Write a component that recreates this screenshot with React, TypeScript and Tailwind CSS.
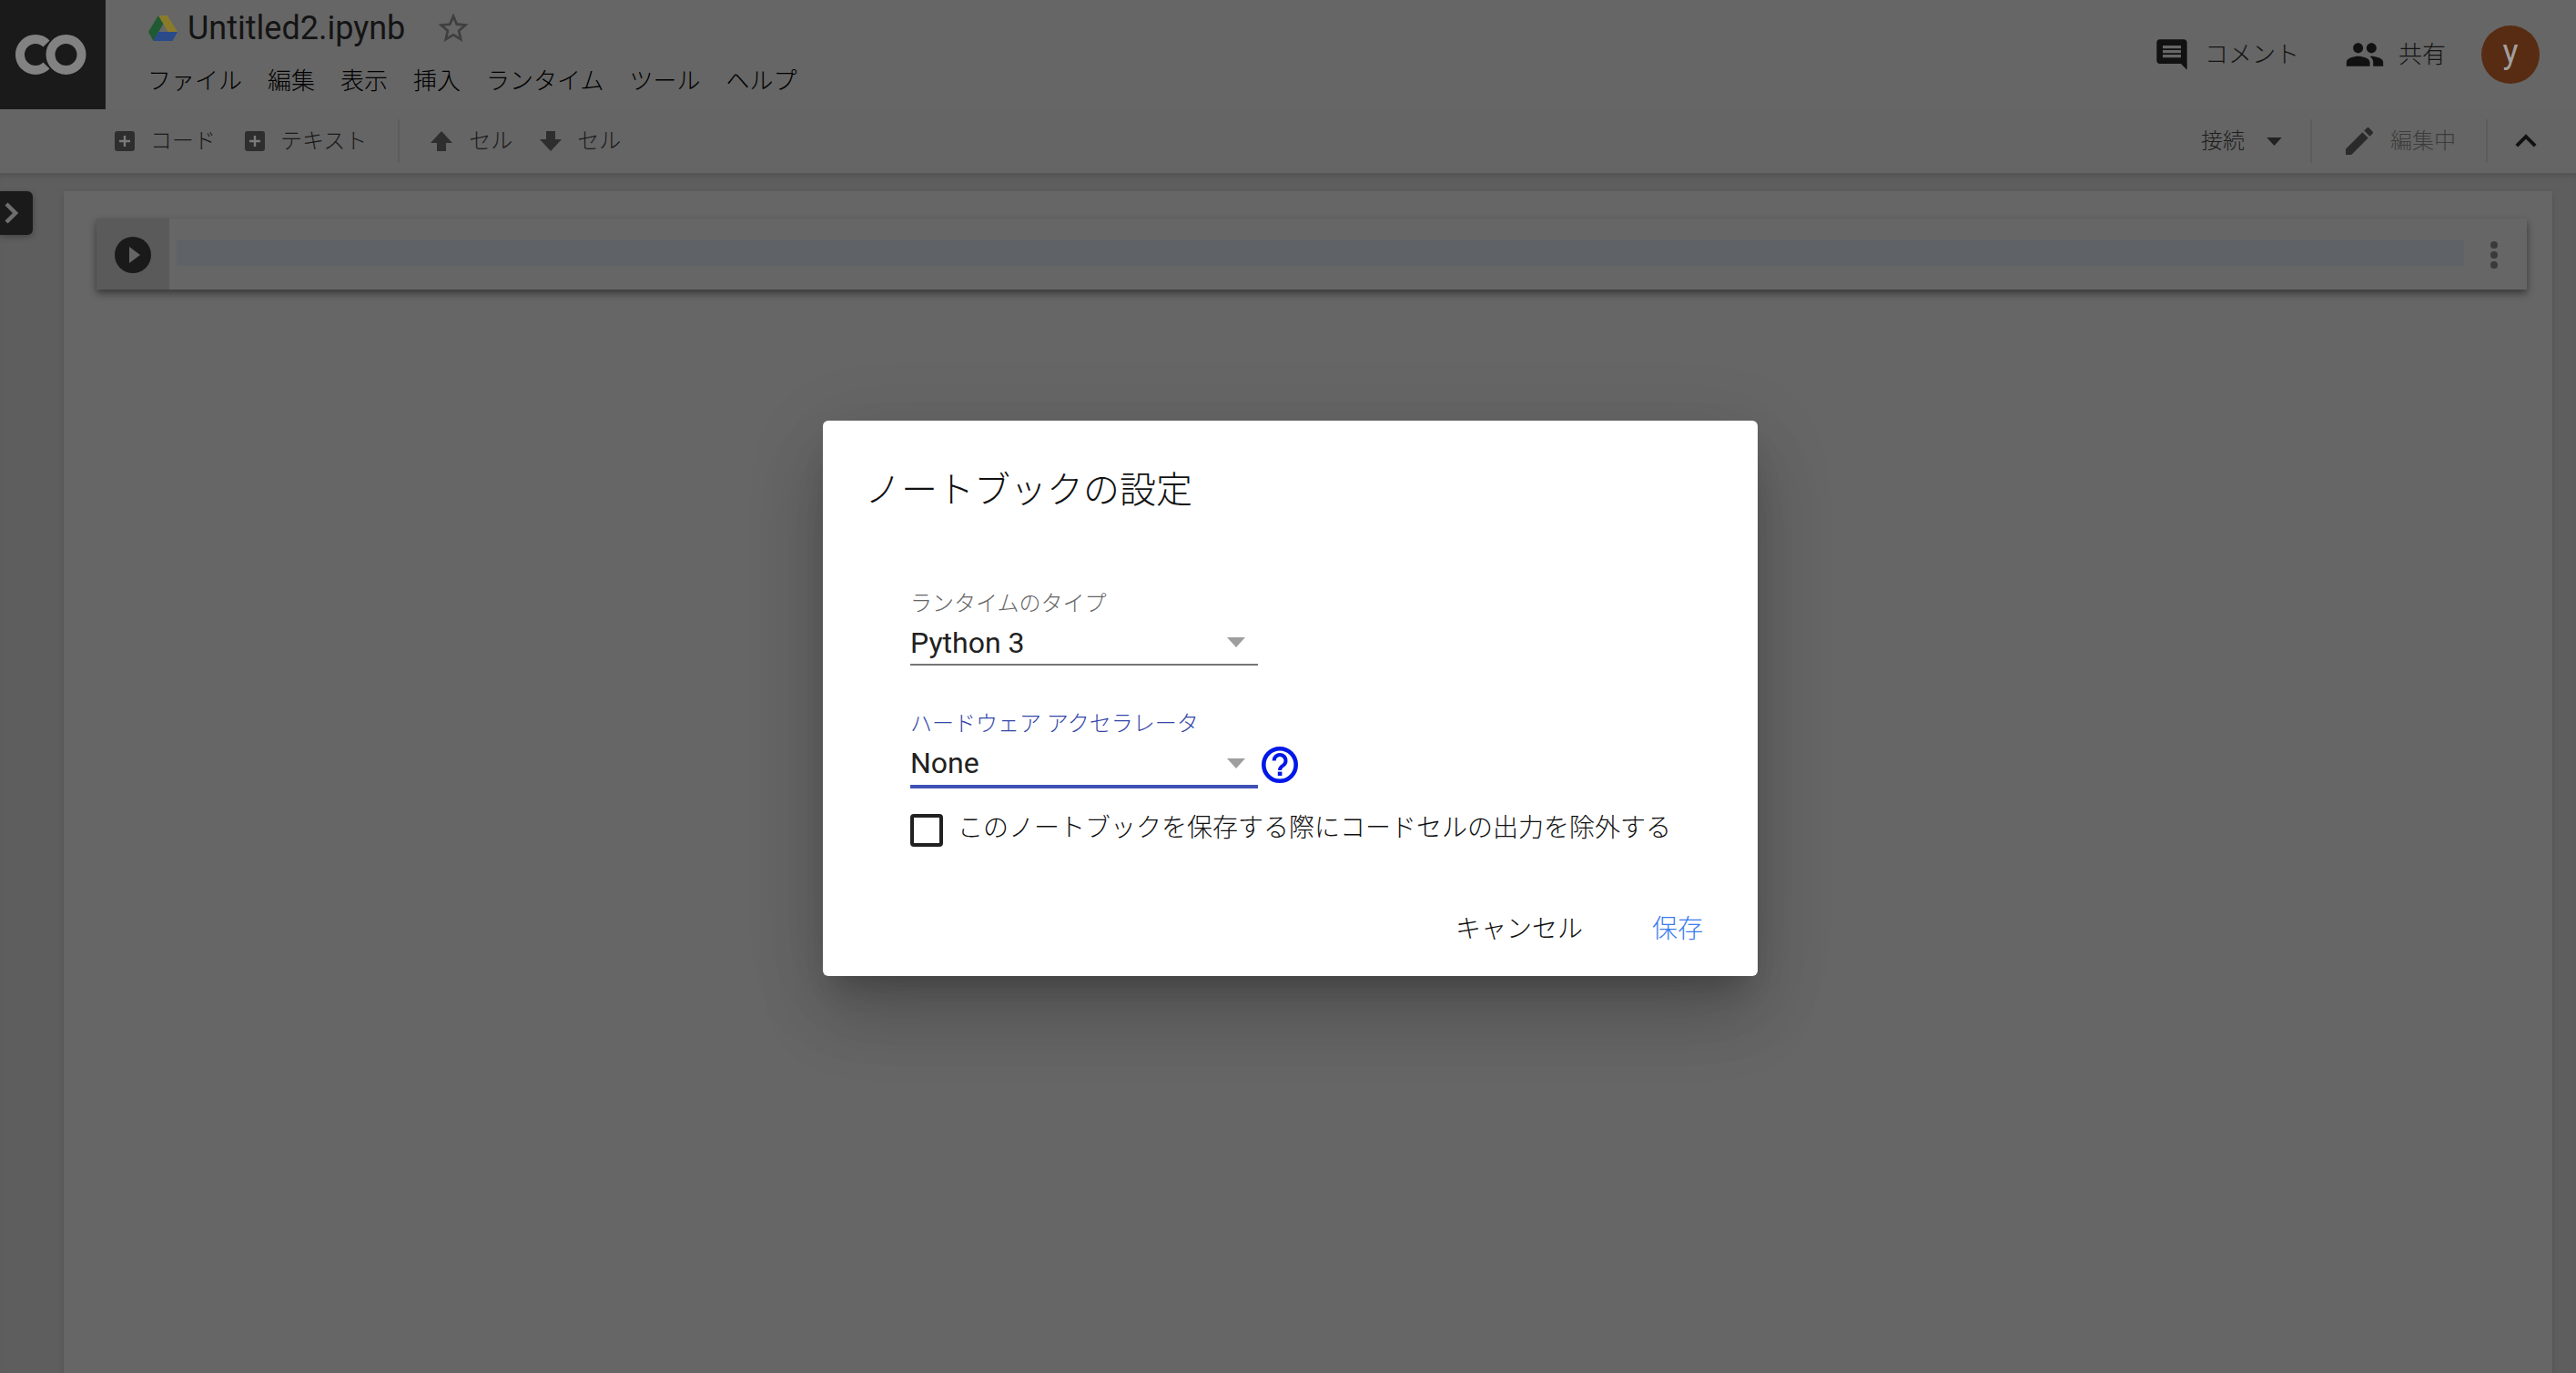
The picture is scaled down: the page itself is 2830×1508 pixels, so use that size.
import React from "react";

function Icon({ d, className }: { d: string; className: string }) {
  return (
    <svg viewBox="0 0 24 24" className={className} fill="currentColor" aria-hidden="true">
      <path d={d} />
    </svg>
  );
}

const COMMENT = "M21.99 4c0-1.1-.89-2-1.99-2H4c-1.1 0-2 .9-2 2v12c0 1.1.9 2 2 2h14l4 4-.01-18zM18 14H6v-2h12v2zm0-3H6V9h12v2zm0-3H6V6h12v2z";
const PEOPLE = "M16 11c1.66 0 2.99-1.34 2.99-3S17.66 5 16 5c-1.66 0-3 1.34-3 3s1.34 3 3 3zm-8 0c1.66 0 2.99-1.34 2.99-3S9.66 5 8 5C6.34 5 5 6.34 5 8s1.34 3 3 3zm0 2c-2.33 0-7 1.17-7 3.5V19h14v-2.5c0-2.33-4.67-3.5-7-3.5zm8 0c-.29 0-.62.02-.97.05 1.16.84 1.97 1.97 1.97 3.45V19h6v-2.5c0-2.33-4.67-3.5-7-3.5z";
const PENCIL = "M3 17.25V21h3.75L17.81 9.94l-3.75-3.75L3 17.25zM20.71 7.04c.39-.39.39-1.02 0-1.41l-2.34-2.34c-.39-.39-1.02-.39-1.41 0l-1.83 1.83 3.75 3.75 1.83-1.83z";
const STAR = "M22 9.24l-7.19-.62L12 2 9.19 8.63 2 9.24l5.46 4.73L5.82 21 12 17.27 18.18 21l-1.63-7.03L22 9.24zM12 15.4l-3.76 2.27 1-4.28-3.32-2.88 4.38-.38L12 6.1l1.71 4.04 4.38.38-3.32 2.88 1 4.28L12 15.4z";
const CHEVRON_UP = "M7.41 15.41L12 10.83l4.59 4.58L18 14l-6-6-6 6z";

function AddBox({ className }: { className: string }) {
  return (
    <svg viewBox="0 0 22 22" className={className} aria-hidden="true">
      <rect width="22" height="22" rx="3" fill="#2e2e2e" />
      <path d="M9.8 5 H12.2 V9.8 H17 V12.2 H12.2 V17 H9.8 V12.2 H5 V9.8 H9.8 Z" fill="#7a7a7a" />
    </svg>
  );
}

function ColabLogo() {
  return (
    <svg viewBox="0 0 78 44" className="h-[44px] w-[78px]" fill="none" stroke="#828282" strokeWidth="10" aria-hidden="true">
      <path d="M34 10 A17 17 0 1 0 34 34" />
      <circle cx="55.5" cy="22" r="17" />
    </svg>
  );
}

function DriveLogo() {
  return (
    <svg viewBox="0 0 32 28" className="h-[28px] w-[32px] shrink-0" aria-hidden="true">
      <path d="M11 0 L0 18 L5.5 28 L16.5 9 Z" fill="#1f5a32" />
      <path d="M11 0 H21 L32 18 H21.5 Z" fill="#8a7a2c" />
      <path d="M5.5 28 L11 18 H32 L26.5 28 Z" fill="#2a4a8a" />
    </svg>
  );
}

function Caret({ className }: { className: string }) {
  return (
    <svg viewBox="0 0 20 11" className={className} fill="currentColor" aria-hidden="true">
      <path d="M0 0 H20 L10 11 Z" />
    </svg>
  );
}

function Field({ label, value, focused, help }: { label: string; value: string; focused?: boolean; help?: boolean }) {
  return (
    <div className="flex items-end">
      <div className="w-[382px]">
        <div className={`h-[30px] text-[24px] font-light leading-[30px] ${focused ? "text-[#3346a8]" : "text-[#666666]"}`}>{label}</div>
        <div className={`flex items-center justify-between pr-[14px] pt-[4px] ${focused ? "h-[56px] border-b-[4px] border-[#3f51b5]" : "h-[53px] border-b-[2px] border-[#757575]"}`}>
          <span className="text-[32px] leading-[40px] text-[#212121]">{value}</span>
          <Caret className="h-[11px] w-[20px] text-[#9e9e9e]" />
        </div>
      </div>
      {help && (
        <svg viewBox="0 0 40 40" className="mb-[6px] ml-[4px] h-[40px] w-[40px]" aria-hidden="true">
          <circle cx="20" cy="20" r="17.7" fill="none" stroke="#0018e8" strokeWidth="4.6" />
          <path d="M13.7 15.5 A6.4 6.4 0 1 1 24 20.5 C21.5 22.3 20 22.8 20 26" fill="none" stroke="#0018e8" strokeWidth="4" />
          <rect x="17.8" y="27.6" width="4.6" height="4.4" fill="#0018e8" />
        </svg>
      )}
    </div>
  );
}

export default function App() {
  return (
    <div className="relative flex h-[1508px] w-[2830px] flex-col overflow-hidden bg-[#5e5e5e] font-[Roboto,'Noto_Sans_CJK_JP',sans-serif]">
      <header className="flex h-[120px] shrink-0 bg-[#666666]">
        <div className="flex h-[120px] w-[116px] shrink-0 items-center justify-center bg-[#1a1a1a] pr-[5px]">
          <ColabLogo />
        </div>
        <div className="flex flex-col pl-[47px]">
          <div className="flex h-[62px] items-center">
            <DriveLogo />
            <span className="ml-[11px] text-[36px] leading-[44px] text-[#141414]">Untitled2.ipynb</span>
            <Icon d={STAR} className="ml-[33px] h-[40px] w-[40px] text-[#3f3f3f]" />
          </div>
          <nav className="-ml-[1px] flex h-[52px] items-center gap-[28px] pt-[2px] text-[26px] font-light leading-[32px] text-[#000000]">
            <span>ファイル</span>
            <span>編集</span>
            <span>表示</span>
            <span>挿入</span>
            <span>ランタイム</span>
            <span>ツール</span>
            <span>ヘルプ</span>
          </nav>
        </div>
        <div className="ml-auto flex items-center pr-[40px]">
          <Icon d={COMMENT} className="h-[40px] w-[40px] text-[#111111]" />
          <span className="ml-[16px] text-[26px] font-light leading-[32px] text-[#141414]">コメント</span>
          <Icon d={PEOPLE} className="ml-[50px] h-[44px] w-[44px] text-[#111111]" />
          <span className="ml-[15px] text-[26px] font-light leading-[32px] text-[#141414]">共有</span>
          <div className="ml-[39px] flex h-[64px] w-[64px] items-center justify-center rounded-full bg-[#582c12] pb-[6px] text-[36px] leading-[40px] text-[#a0a0a0]">y</div>
        </div>
      </header>

      <div className="flex h-[70px] shrink-0 items-center bg-[#656565] pl-[126px] text-[24px] font-light leading-[30px] text-[#1a1a1a]">
        <AddBox className="h-[22px] w-[22px]" />
        <span className="ml-[17px]">コード</span>
        <AddBox className="ml-[32px] h-[22px] w-[22px]" />
        <span className="ml-[17px]">テキスト</span>
        <div className="ml-[34px] h-[48px] w-[2px] bg-[#5c5c5c]" />
        <svg viewBox="0 0 24 22" className="ml-[34px] h-[22px] w-[24px] text-[#2e2e2e]" fill="currentColor" aria-hidden="true">
          <path d="M12 0 L24 13 H17 V22 H7 V13 H0 Z" />
        </svg>
        <span className="ml-[18px]">セル</span>
        <svg viewBox="0 0 24 22" className="ml-[30px] h-[22px] w-[24px] text-[#2e2e2e]" fill="currentColor" aria-hidden="true">
          <path d="M7 0 H17 V9 H24 L12 22 L0 9 H7 Z" />
        </svg>
        <span className="ml-[17px]">セル</span>
        <div className="ml-auto flex items-center pr-[32px]">
          <span className="text-[#1e1e1e]">接続</span>
          <Caret className="ml-[24px] h-[9px] w-[17px] text-[#222222]" />
          <div className="ml-[31px] h-[48px] w-[2px] bg-[#5c5c5c]" />
          <Icon d={PENCIL} className="ml-[32px] h-[40px] w-[40px] text-[#2a2a2a]" />
          <span className="ml-[14px] text-[#3c3c3c]">編集中</span>
          <div className="ml-[33px] h-[48px] w-[2px] bg-[#5c5c5c]" />
          <Icon d={CHEVRON_UP} className="ml-[19px] h-[46px] w-[46px] text-[#111111]" />
        </div>
      </div>

      <main className="flex flex-1 items-start pt-[20px] shadow-[inset_0_8px_8px_-6px_rgba(0,0,0,0.15)]">
        <button className="flex h-[48px] w-[36px] shrink-0 items-center justify-start rounded-r-[6px] bg-[#1a1a1a] pl-[5px] shadow-[0_2px_6px_rgba(0,0,0,0.3)]">
          <svg viewBox="0 0 15 24" className="h-[24px] w-[15px]" fill="none" stroke="#6e6e6e" strokeWidth="4.5" aria-hidden="true">
            <path d="M2 2 L12 12 L2 22" />
          </svg>
        </button>
        <section className="ml-[34px] h-[1308px] w-[2734px] shrink-0 bg-[#666666] pt-[30px] pl-[36px] shadow-[0_2px_6px_rgba(0,0,0,0.15)]">
          <div className="flex h-[78px] w-[2670px] items-center bg-[#666666] shadow-[0_4px_8px_rgba(0,0,0,0.45)]">
            <div className="flex h-full w-[80px] shrink-0 items-center justify-center bg-[#5a5a5a] pt-[2px]">
              <svg viewBox="0 0 40 40" className="h-[40px] w-[40px]" aria-hidden="true">
                <circle cx="20" cy="20" r="20" fill="#1a1a1a" />
                <path d="M16 11 L28 20 L16 29 Z" fill="#666666" />
              </svg>
            </div>
            <div className="mb-[3px] ml-[8px] h-[28px] w-[2513px] bg-[#5f6266]" />
            <div className="ml-[29px] flex flex-col gap-[3px] pt-[2px]">
              <div className="h-[8px] w-[8px] rounded-full bg-[#3a3a3a]" />
              <div className="h-[8px] w-[8px] rounded-full bg-[#3a3a3a]" />
              <div className="h-[8px] w-[8px] rounded-full bg-[#3a3a3a]" />
            </div>
          </div>
        </section>
      </main>

      <div className="absolute left-[904px] top-[462px] flex h-[610px] w-[1027px] flex-col rounded-[6px] bg-white pl-[46px] pr-[60px] shadow-[0_48px_76px_rgba(0,0,0,0.14),0_18px_92px_rgba(0,0,0,0.12),0_22px_30px_-14px_rgba(0,0,0,0.2)]">
        <h2 className="mt-[52px] h-[50px] text-[40px] font-light leading-[50px] text-[#111111]">ノートブックの設定</h2>
        <div className="ml-[50px] mt-[84px] flex flex-col gap-[49px]">
          <Field label="ランタイムのタイプ" value="Python 3" />
          <Field label="ハードウェア アクセラレータ" value="None" focused help />
        </div>
        <label className="ml-[50px] mt-[24px] flex items-center">
          <span className="mt-[4px] h-[36px] w-[36px] rounded-[4px] border-[4px] border-[#212121]" />
          <span className="ml-[16px] text-[28px] font-light leading-[36px] text-[#111111]">このノートブックを保存する際にコードセルの出力を除外する</span>
        </label>
        <div className="mt-[73px] flex justify-end gap-[76px] text-[28px] font-light leading-[36px]">
          <button className="text-[#111111]">キャンセル</button>
          <button className="text-[#3b7cf0]">保存</button>
        </div>
      </div>
    </div>
  );
}
